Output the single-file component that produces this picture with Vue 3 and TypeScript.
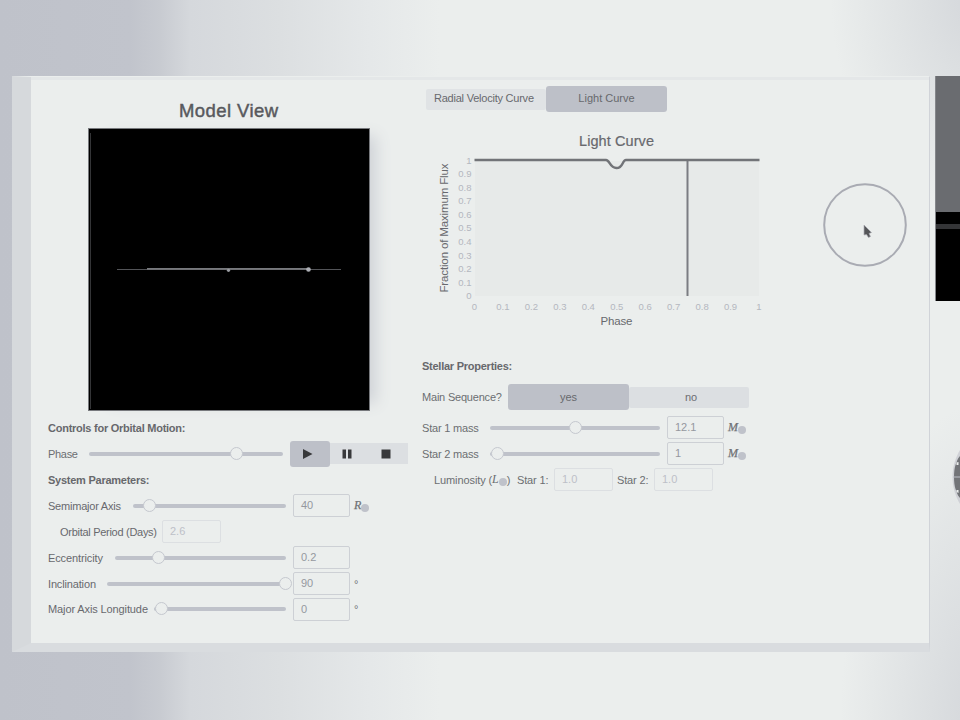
<script setup lang="ts">
interface Param {
  label: string
  labelWidth: number
  spacing: number
  thumb: number
  value: string
  unit: string
}

const systemTop: Param = { label: 'Semimajor Axis', labelWidth: 85, spacing: 73, thumb: 16, value: '40', unit: 'R' }
const systemParams: Param[] = [
  { label: 'Eccentricity', labelWidth: 67, spacing: 55, thumb: 43, value: '0.2', unit: '' },
  { label: 'Inclination', labelWidth: 59, spacing: 48, thumb: 178, value: '90', unit: '°' },
  { label: 'Major Axis Longitude', labelWidth: 106, spacing: 100, thumb: 7, value: '0', unit: '°' },
]
const masses = [
  { label: 'Star 1 mass', thumb: 85, value: '12.1' },
  { label: 'Star 2 mass', thumb: 7, value: '1' },
]

const ticks = Array.from({ length: 11 }, (_, i) => ({
  text: i === 0 ? '0' : i === 10 ? '1' : (i / 10).toFixed(1),
  x: 54.5 + i * 28.45,
  y: 165.7 - i * 13.55,
}))
</script>

<template>
  <div class="desktop">
    <main class="window">
      <section class="left">
        <h1><svg width="104" height="24"><text x="2" y="18" textLength="99" font-size="18.500">Model View</text></svg></h1>
        <div class="model">
          <svg width="280" height="281" viewBox="0 0 280 281">
            <path d="M1.500 4V280" stroke="#343537" stroke-width="1" />
            <path d="M28 140.500H252" stroke="#535458" />
            <path d="M58 139.800H219" stroke="#77797d" stroke-width="1.800" />
            <circle cx="139.500" cy="141.300" r="1.600" fill="#9b9da2" />
            <circle cx="219.500" cy="140.500" r="2.300" fill="#aeb0b6" />
          </svg>
        </div>

        <h2>Controls for Orbital Motion:</h2>
        <div class="row phase-row">
          <label class="phase">Phase</label>
          <div class="slider"><i></i><b :style="{ left: '147px' }"></b></div>
          <div class="player">
            <button class="selected"><svg width="12" height="12"><path d="M1 1L10.500 6L1 11Z" /></svg></button>
            <button><svg width="12" height="12"><path d="M1.500 1.500H5V10.500H1.500ZM7 1.500H10.500V10.500H7Z" /></svg></button>
            <button><svg width="12" height="12"><path d="M1.500 1.500H10.500V10.500H1.500Z" /></svg></button>
          </div>
        </div>
        <h2>System Parameters:</h2>
        <div class="row">
          <label :style="{ width: systemTop.labelWidth + 'px' }">
            <svg :width="systemTop.spacing" height="16"><text x="0" y="12" :textLength="systemTop.spacing">{{ systemTop.label }}</text></svg>
          </label>
          <div class="slider"><i></i><b :style="{ left: systemTop.thumb + 'px' }"></b></div>
          <div class="field">{{ systemTop.value }}</div>
          <span class="sym">{{ systemTop.unit }}<i class="sun"></i></span>
        </div>
        <div class="row indent">
          <label><svg width="97" height="16"><text x="0" y="12" textLength="97">Orbital Period (Days)</text></svg></label>
          <div class="field readonly">2.6</div>
        </div>
        <div v-for="p in systemParams" :key="p.label" class="row">
          <label :style="{ width: p.labelWidth + 'px' }">
            <svg :width="p.spacing" height="16"><text x="0" y="12" :textLength="p.spacing">{{ p.label }}</text></svg>
          </label>
          <div class="slider"><i></i><b :style="{ left: p.thumb + 'px' }"></b></div>
          <div class="field">{{ p.value }}</div>
          <span class="unit">{{ p.unit }}</span>
        </div>
      </section>

      <section class="right">
        <div class="tabs">
          <button><svg width="100" height="16"><text x="0" y="12" textLength="100">Radial Velocity Curve</text></svg></button>
          <button class="selected">Light Curve</button>
        </div>
        <svg class="chart" width="350" height="202" viewBox="0 0 350 202">
          <text class="chart-title" x="159" y="16" font-size="14.500" textLength="75">Light Curve</text>
          <rect x="55" y="31" width="284" height="135" fill="#e7eae9" />
          <path d="M267.500 31V166" stroke="#7b7d82" stroke-width="2" />
          <path d="M54.500 30H186C190 30 189.500 38 196.500 38S202 30 206 30H339.500" fill="none" stroke="#727478" stroke-width="2.400" />
          <g class="ticks">
            <text v-for="t in ticks" :key="'x' + t.text" :x="t.x" y="180" text-anchor="middle">{{ t.text }}</text>
            <text v-for="t in ticks" :key="'y' + t.text" x="51.500" :y="t.y + 3.500" text-anchor="end">{{ t.text }}</text>
          </g>
          <text x="180.500" y="195" font-size="11.500" textLength="32">Phase</text>
          <text transform="translate(28 162.500) rotate(-90)" font-size="11.500" textLength="129">Fraction of Maximum Flux</text>
        </svg>

        <h2>Stellar Properties:</h2>
        <div class="row sequence">
          <label>Main Sequence?</label>
          <button class="selected">yes</button>
          <button class="no">no</button>
        </div>
        <div v-for="m in masses" :key="m.label" class="row">
          <label class="mass">{{ m.label }}</label>
          <div class="slider"><i></i><b :style="{ left: m.thumb + 'px' }"></b></div>
          <div class="field">{{ m.value }}</div>
          <span class="sym">M<i class="sun"></i></span>
        </div>
        <div class="row lum">
          <label class="lum-name">Luminosity (<em>L</em><i class="sun"></i>)</label>
          <label class="star">Star 1:</label>
          <div class="field readonly">1.0</div>
          <label class="star second">Star 2:</label>
          <div class="field readonly">1.0</div>
        </div>
      </section>
    </main>

    <aside>
      <div class="video"></div>
      <svg class="reel" width="10" height="64" viewBox="0 0 10 64">
        <circle cx="55" cy="32" r="52.500" fill="#cfd1d6" />
        <path d="M10 11C7 14 7 17 5.500 20C4.500 23 4 27 4 32S4.500 41 5.500 44C7 47 7 50 10 53Z" fill="#727478" />
        <path d="M3 32H10" stroke="#bdc0c8" />
        <path d="M6.500 17.500L8.500 17V20H6.500ZM6.500 45H8.500V48L6.500 47Z" fill="#ebeeed" />
      </svg>
    </aside>

    <svg class="pointer" width="86" height="86" viewBox="0 0 86 86">
      <circle cx="43" cy="43" r="40.800" fill="none" stroke="#a9abb3" stroke-width="2" />
      <path d="M42 43L49.500 50.500L47 51.500L48.500 54.500L46.500 55.500L44.500 52.500L42 53Z" fill="#555659" stroke="#a9abb1" stroke-width=".7" />
    </svg>
  </div>
</template>

<style>
body { margin: 0; overflow: hidden; }
</style>

<style scoped>
* { box-sizing: border-box; }
.desktop {
  position: relative;
  display: flex;
  width: 960px;
  height: 720px;
  padding: 76px 0 0 12px;
  overflow: hidden;
  color: #707276;
  font: 11px "Liberation Sans", Arial, sans-serif;
  background:
    radial-gradient(ellipse 150px 330px at 990px 730px, #d2d5d9 0, #d2d5d900 100%),
    radial-gradient(ellipse 160px 230px at 990px -10px, #d2d5d9 0, #d2d5d900 100%),
    linear-gradient(90deg, #bfc2ca 0, #c1c4cc 130px, #c8cbd1 160px, #d5d8dc 190px, #dcdfe1 280px, #e5e8e9 370px, #ebeeed 440px);
}
svg { display: block; flex: none; overflow: visible; }
svg text { fill: #68696e; }
.window {
  display: flex;
  width: 918px;
  height: 576px;
  border-top: 1px solid #ebeeed;
  border-left: 19px solid #d6d9dc;
  border-right: 1px solid #d0d3d8;
  border-bottom: 9px solid #d9dcdf;
  background: #ebeeed;
  box-shadow: inset 0 4px 0 -1px #e4e7e8;
}
.left { width: 374px; padding-left: 17px; }
.right { width: 390px; padding: 9px 0 0 17px; }
h1 { margin: 0; height: 51px; padding: 22px 0 0 129px; font-weight: 400; }
h1 text { fill: #58595d; stroke: #58595d; stroke-width: .45; }
.chart-title { stroke: #68696e; stroke-width: .2; }
.model {
  width: 282px;
  height: 283px;
  margin: 0 0 4px 40px;
  border: 1px solid #77797d;
  background: #000;
  box-shadow: 14px 0 14px -8px #cfd2d7;
}
h2 { display: flex; align-items: center; height: 26px; margin: 0; font-size: 11px; letter-spacing: -.25px; color: #67686c; white-space: nowrap; }
.row { display: flex; align-items: center; height: 25.900px; white-space: nowrap; }
label { flex: none; color: #6c6e72; }
.phase { width: 41px; letter-spacing: -.3px; }
.slider { position: relative; flex: none; display: flex; align-items: center; width: 170px; height: 20px; }
.slider i { width: 100%; height: 4px; border-radius: 2px; background: #bfc2ca; }
.slider b { position: absolute; top: 3px; width: 13px; height: 13px; margin-left: -6.500px; border: 1px solid #c5c8cf; border-radius: 50%; background: #ebeeed; }
.left .row { width: 323px; }
.left .phase-row { width: 360px; }
.left .slider { flex: 1; min-width: 0; }
.field { flex: none; width: 57px; height: 23px; margin-left: 7px; padding: 0 7px; border: 1px solid #cdd0d5; border-radius: 2px; color: #95989f; line-height: 21px; }
.readonly { width: 59px; margin-left: 5px; border-color: #dcdfe2; color: #bdc0c8; }
.indent { padding-left: 12px; }
.sym, .unit { flex: none; width: 21px; padding-left: 4px; }
.sym { display: flex; align-items: center; font: italic 12px "Liberation Serif", serif; -webkit-text-stroke: .25px #707276; }
.sun { flex: none; display: inline-block; width: 8px; height: 8px; margin-top: 5px; border-radius: 50%; background: #bfc2ca; }
button { display: flex; align-items: center; justify-content: center; flex: none; height: 21px; margin: 0; padding: 0; border: 0; border-radius: 2px; background: #dcdfe2; color: #6c6e72; font: inherit; }
button.selected { height: 26px; border-radius: 3px; background: #bdc0c8; color: #67696d; }
.player { display: flex; align-items: center; margin-left: 7px; }
.player button { width: 39px; border-radius: 0; }
.player button.selected { width: 40px; padding-right: 4px; border-radius: 3px; }
.player button:not(.selected) { padding-right: 5px; }
.player path { fill: #38393b; }
.tabs { display: flex; align-items: center; height: 26px; padding-left: 4px; }
.tabs button { width: 120px; padding: 0 5px 3px 0; background: #e0e3e5; }
.tabs button.selected { width: 121px; padding: 0 0 3px; background: #bdc0c8; }
.ticks text { font-size: 9.500px; fill: #b4b7bf; }
.chart { margin: 18px 0 0 -2px; }
.right h2 { height: 26px; margin-top: 21px; }
.sequence label { width: 86px; letter-spacing: -.2px; }
.sequence button { width: 120px; }
.sequence button.selected { width: 121px; }
.sequence .no { padding-left: 4px; }
.mass { width: 68px; letter-spacing: -.2px; }
.right .row { width: 330px; }
.right .sequence { height: 36px; }
.lum { padding-left: 12px; }
.lum-name { display: flex; align-items: center; width: 83px; letter-spacing: -.1px; }
.lum-name em { font: italic 12px "Liberation Serif", serif; }
.lum .star { width: 33px; letter-spacing: -.15px; }
.lum .second { margin-left: 4px; }
.lum .readonly { margin-left: 4px; }
aside { display: flex; flex-direction: column; width: 30px; padding-left: 5px; }
.video { width: 25px; height: 225px; border-left: 1px solid #85878b; background: linear-gradient(#6a6c70 0 136px, #000 136px 148px, #343537 148px 153px, #000 153px); }
.reel { margin: 144px 0 0 15px; }
.pointer { position: absolute; left: 821.500px; top: 181.500px; }
</style>
